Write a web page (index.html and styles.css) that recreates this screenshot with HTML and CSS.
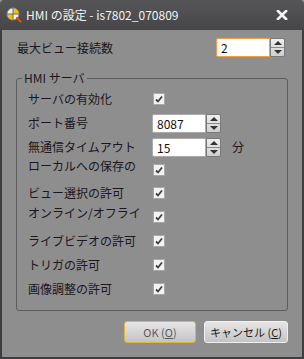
FILE: index.html
```html
<!DOCTYPE html>
<html lang="ja">
<head>
  <meta charset="UTF-8">
  <meta name="viewport" content="width=device-width, initial-scale=1.0">
  <title>HMI の設定</title>
  <link rel="stylesheet" href="styles.css">
</head>
<body>
<div class="window">
  <div class="titlebar">
    <svg class="app-icon" width="16" height="16" viewBox="0 0 16 16">
      <circle cx="7" cy="7" r="6" fill="#f4f4f4" stroke="#8a8a8a" stroke-width="1"/>
      <path d="M7 1.5 A5.5 5.5 0 0 1 12.5 7 L7 7 Z" fill="#f2c400"/>
      <path d="M7 12.5 A5.5 5.5 0 0 1 1.5 7 L7 7 Z" fill="#f2c400"/>
      <path d="M7 1 V13 M1 7 H13" stroke="#6a6a6a" stroke-width="1"/>
      <path d="M11 11 L14.5 14.5" stroke="#d05a10" stroke-width="2.2" stroke-linecap="round"/>
    </svg>
    <span class="title">HMI の設定 - is7802_070809</span>
    <svg class="close" width="12" height="10" viewBox="0 0 12 10">
      <path d="M2 1 L10 9 M10 1 L2 9" stroke="#f4f4f4" stroke-width="2.6" stroke-linecap="square"/>
    </svg>
  </div>

  <div class="content">
    <div class="top-row">
      <span class="label">最大ビュー接続数</span>
      <div class="spin focus">
        <div class="spin-field">2</div>
        <div class="spin-btns"><span class="up"></span><span class="down"></span></div>
      </div>
    </div>

    <fieldset class="group">
      <legend>HMI サーバ</legend>
      <div class="row r1">
        <span class="lbl">サーバの有効化</span>
        <span class="check"></span>
      </div>
      <div class="row">
        <span class="lbl">ポート番号</span>
        <div class="spin">
          <div class="spin-field">8087</div>
          <div class="spin-btns"><span class="up"></span><span class="down"></span></div>
        </div>
      </div>
      <div class="row">
        <span class="lbl">無通信タイムアウト</span>
        <div class="spin">
          <div class="spin-field">15</div>
          <div class="spin-btns"><span class="up"></span><span class="down"></span></div>
        </div>
        <span class="unit">分</span>
      </div>
      <div class="row r4 cut">
        <span class="lbl">ローカルへの保存の</span>
        <span class="check"></span>
      </div>
      <div class="row">
        <span class="lbl">ビュー選択の許可</span>
        <span class="check"></span>
      </div>
      <div class="row cut">
        <span class="lbl">オンライン/オフライ</span>
        <span class="check"></span>
      </div>
      <div class="row">
        <span class="lbl">ライブビデオの許可</span>
        <span class="check"></span>
      </div>
      <div class="row">
        <span class="lbl">トリガの許可</span>
        <span class="check"></span>
      </div>
      <div class="row">
        <span class="lbl">画像調整の許可</span>
        <span class="check"></span>
      </div>
    </fieldset>

    <div class="buttons">
      <button class="btn ok">OK (<u>O</u>)</button>
      <button class="btn cancel">キャンセル (<u>C</u>)</button>
    </div>
  </div>
</div>
</body>
</html>
```

FILE: styles.css
```css
body {
  margin: 0;
  background-color: #8e8e8e;
  font-family: "Noto Sans CJK JP", "Noto Sans", sans-serif;
  font-size: 12px;
  color: #1c1620;
}

.window {
  width: 304px;
  height: 359px;
  box-sizing: border-box;
  padding: 0 2px 2px;
  background-color: #3e3e42;
  border-radius: 5px 5px 0 0;
  display: flex;
  flex-direction: column;
}

.titlebar {
  height: 30px;
  display: flex;
  align-items: center;
  padding: 0 6px 0 6px;
  background: linear-gradient(#565658, #464648);
  margin: 0 -2px;
  border-radius: 5px 5px 0 0;
}

.app-icon {
  margin-right: 4px;
}

.title {
  color: #f2f2f2;
  font-size: 12px;
  line-height: 16px;
  flex: 1;
}

.close {
  margin-right: 10px;
}

.content {
  flex: 1;
  background-color: #8e8e8e;
  padding: 0 14px;
  display: flex;
  flex-direction: column;
}

.top-row {
  display: flex;
  align-items: center;
  justify-content: space-between;
  height: 19px;
  margin: 8px 3px 0 1px;
}

.label, .lbl {
  line-height: 14px;
  white-space: nowrap;
}

/* spinner */
.spin {
  display: flex;
  height: 19px;
}

.spin-field {
  width: 52px;
  height: 17px;
  background-color: #fff;
  border: 1px solid #a9a9a9;
  border-radius: 2px 0 0 2px;
  line-height: 17px;
  padding-left: 4px;
  box-sizing: content-box;
  width: 48px;
  font-size: 12px;
  color: #101018;
}

.spin.focus .spin-field {
  border-color: #f0a040;
}

.spin-btns {
  width: 13px;
  border: 1px solid #7a7a7a;
  border-radius: 0 2px 2px 0;
  display: flex;
  flex-direction: column;
  background: linear-gradient(#eeeeee, #cfcfcf);
}

.spin-btns span {
  flex: 1;
  display: flex;
  align-items: center;
  justify-content: center;
}

.spin-btns .up {
  border-bottom: 1px solid #8a8a8a;
}

.spin-btns .up::after {
  content: "";
  border: 4px solid transparent;
  border-top: 0;
  border-bottom: 4px solid #333;
}

.spin-btns .down::after {
  content: "";
  border: 4px solid transparent;
  border-bottom: 0;
  border-top: 4px solid #333;
}

/* group box */
.group {
  margin: 13px 0 0;
  padding: 0 5px 9px;
  border: 1px solid #5c5c5c;
  border-radius: 3px;
}

.group legend {
  padding: 0 2px;
  line-height: 16px;
}

.row {
  display: flex;
  align-items: center;
  height: 24px;
  padding-left: 6px;
}

.row.r1 {
  height: 25px;
}

.row.r4 {
  height: 22px;
}

.row .lbl {
  width: 124px;
}

.row.cut .lbl {
  margin-bottom: 8px;
}

.check {
  width: 10px;
  height: 10px;
  margin-left: 1px;
  border: 1px solid #a8a8a8;
  background: #f2f2f2 url("data:image/svg+xml,%3Csvg xmlns='http://www.w3.org/2000/svg' width='10' height='10'%3E%3Cpath d='M2 5.5 L4 7.5 L8 2.5' fill='none' stroke='%23404040' stroke-width='1.8'/%3E%3C/svg%3E") no-repeat center;
}

.unit {
  margin-left: 11px;
  line-height: 14px;
}

/* buttons */
.buttons {
  display: flex;
  justify-content: flex-end;
  gap: 8px;
  margin-top: 10px;
}

.btn {
  all: unset;
  height: 20px;
  box-sizing: content-box;
  border-radius: 3px;
  font-family: "Noto Sans CJK JP", "Noto Sans", sans-serif;
  font-size: 11px;
  line-height: 20px;
  text-align: center;
  background: linear-gradient(#e6e6e6, #c4c4c4);
}

.btn.ok {
  width: 70px;
  border: 1px solid #e2b440;
  color: #5a5a5a;
}

.btn.cancel {
  width: 82px;
  border: 1px solid #f0f0f0;
  color: #1c1c1c;
}
```
